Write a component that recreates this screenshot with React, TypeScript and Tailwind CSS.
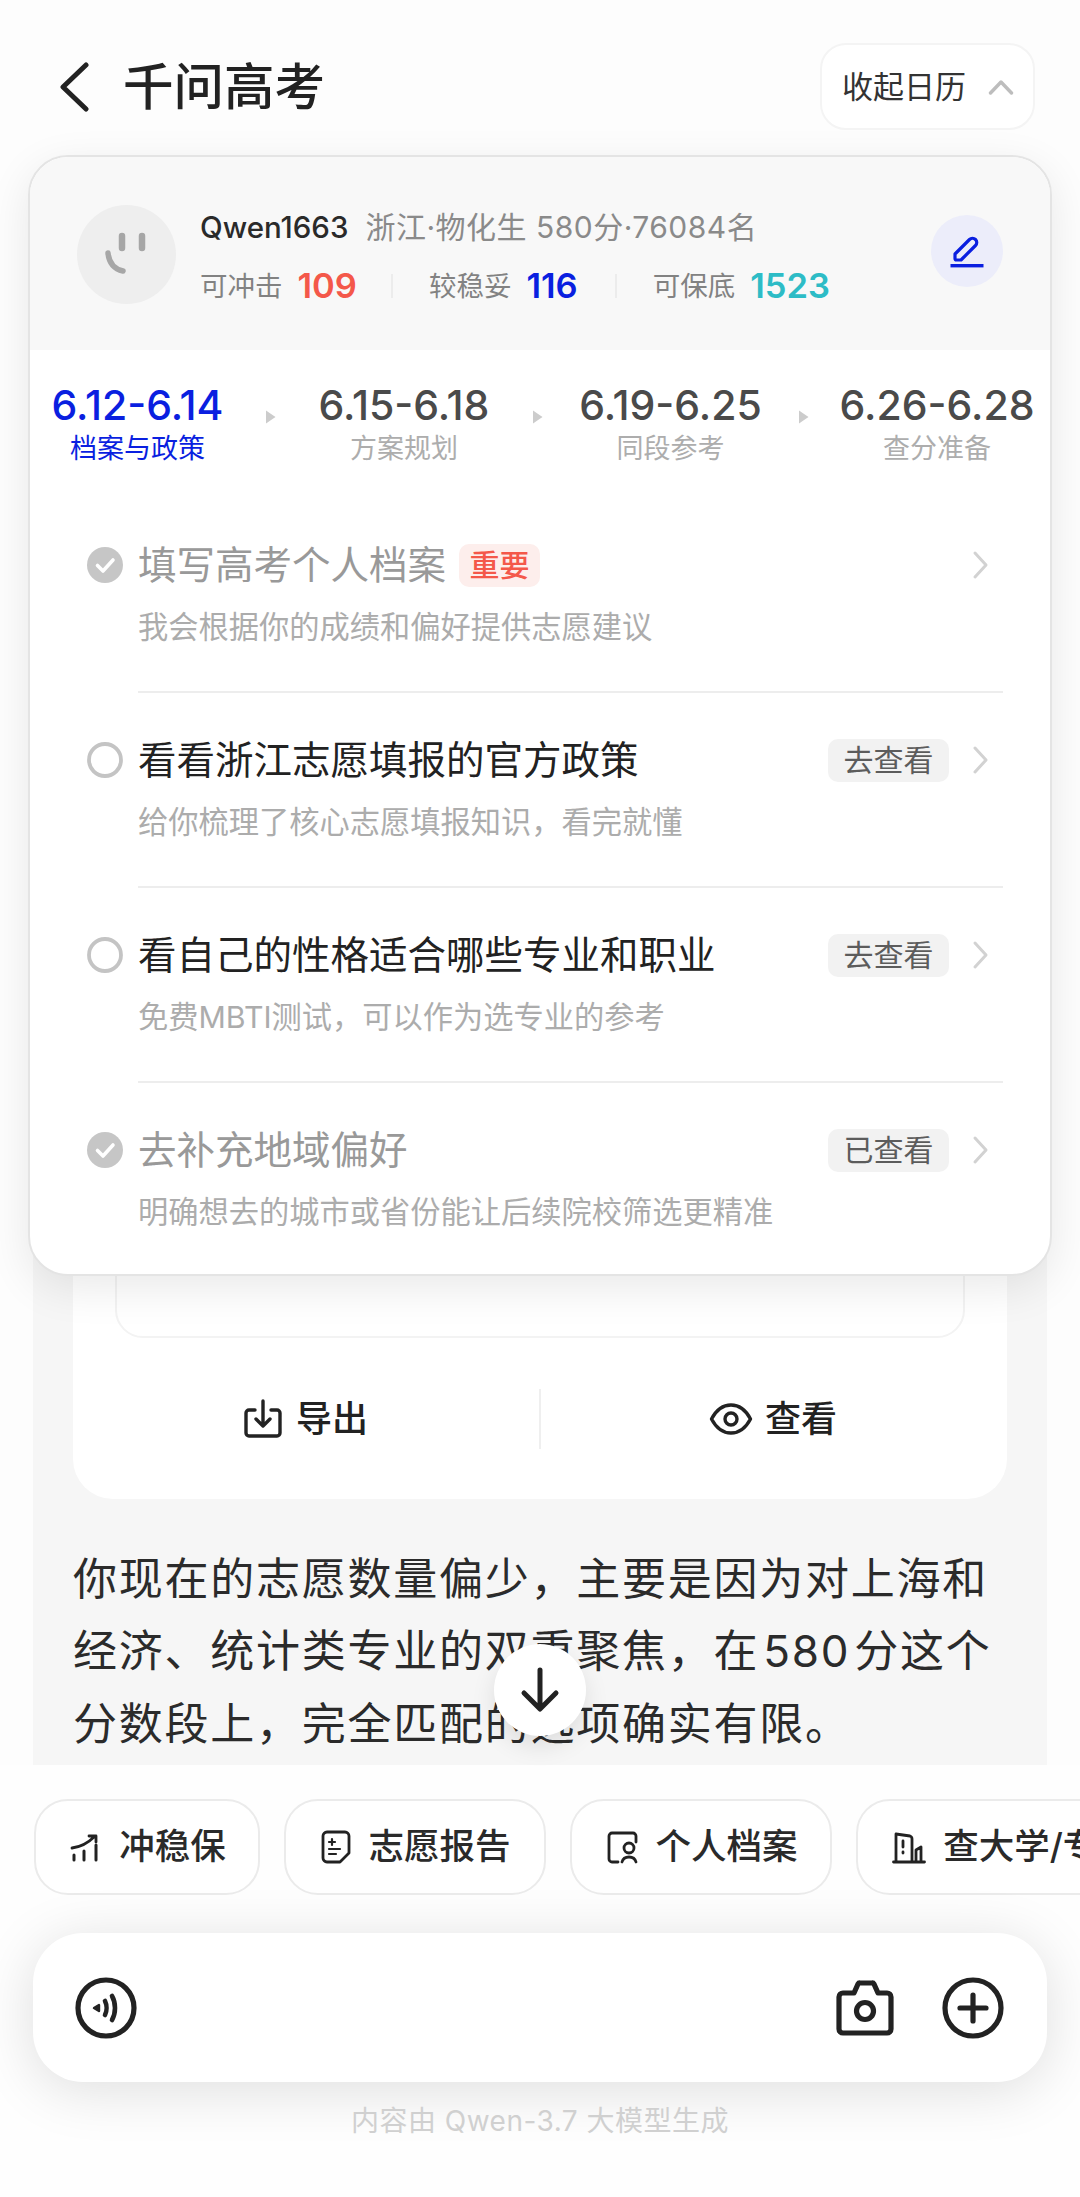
import React from "react";

const FONT = "font-['Inter','Noto_Sans_CJK_SC',sans-serif]";

function Check() {
  return (
    <svg width="36" height="36" viewBox="0 0 36 36" className="shrink-0">
      <circle cx="18" cy="18" r="18" fill="#c6c6c6" />
      <path d="M10.5 18.5l5.5 5.5 10-11" fill="none" stroke="#fff" strokeWidth="3.6" strokeLinecap="round" strokeLinejoin="round" />
    </svg>
  );
}
function Ring() {
  return (
    <svg width="36" height="36" viewBox="0 0 36 36" className="shrink-0">
      <circle cx="18" cy="18" r="16" fill="none" stroke="#c4c4c4" strokeWidth="3.8" />
    </svg>
  );
}
function Chev({ c = "#d2d2d2" }: { c?: string }) {
  return (
    <svg width="18" height="30" viewBox="0 0 18 30" className="shrink-0">
      <path d="M4 3l11 12L4 27" fill="none" stroke={c} strokeWidth="3" strokeLinecap="round" strokeLinejoin="round" />
    </svg>
  );
}

type RowProps = {
  done: boolean;
  title: string;
  sub: string;
  chip?: string;
  tag?: string;
  last?: boolean;
};
function Row({ done, title, sub, chip, tag, last }: RowProps) {
  return (
    <div className={last ? "pt-[42px] pb-[42px]" : "pt-[42px] pb-[44px] border-b-2 border-[#ededed]"}>
      <div className="relative flex items-center h-[50px]">
        <div className="absolute left-[-51px] top-[7px]">{done ? <Check /> : <Ring />}</div>
        <span className={`text-[38.5px] leading-[50px] whitespace-nowrap ${done ? "text-[#999999]" : "text-[#222222]"}`}>{title}</span>
        {tag && (
          <span className="ml-[13px] h-[43px] w-[81px] rounded-[10px] bg-[#fdeeec] text-[#f4584a] text-[30px] leading-[43px] font-medium text-center">
            {tag}
          </span>
        )}
        {chip && (
          <span className="ml-auto h-[43px] w-[121px] rounded-[10px] bg-[#f2f2f2] text-[#5c5c5c] text-[30px] leading-[43px] text-center">
            {chip}
          </span>
        )}
        <div className={chip ? "ml-[22px] mr-[14px]" : "ml-auto mr-[14px]"}>
          <Chev />
        </div>
      </div>
      <div className="mt-[17px] text-[30.25px] leading-[40px] text-[#acacac] whitespace-nowrap">{sub}</div>
    </div>
  );
}

function Tab({ date, label, active }: { date: string; label: string; active?: boolean }) {
  return (
    <div className="w-[175px] shrink-0 flex flex-col items-center">
      <div className={`text-[41px] leading-[54px] font-medium whitespace-nowrap ${active ? "text-[#0a1fe0]" : "text-[#4a4a4a]"}`}>{date}</div>
      <div className={`text-[27px] leading-[32px] mt-[1px] whitespace-nowrap ${active ? "text-[#0a1fe0]" : "text-[#adadad]"}`}>{label}</div>
    </div>
  );
}
function TabArrow() {
  return (
    <div className="w-[91.5px] shrink-0 flex justify-center pt-[32px]">
      <svg width="11" height="14" viewBox="0 0 11 14">
        <path d="M1 0.5L10.5 7 1 13.5z" fill="#cccccc" />
      </svg>
    </div>
  );
}

function Stat({ label, value, color }: { label: string; value: string; color: string }) {
  return (
    <div className="flex items-center gap-[15px] whitespace-nowrap">
      <span className="text-[27.5px] leading-[40px] text-[#828282]">{label}</span>
      <span className={`text-[34.5px] leading-[40px] font-semibold ${color}`}>{value}</span>
    </div>
  );
}

function Chip({ icon, text, w }: { icon: React.ReactNode; text: string; w: string }) {
  return (
    <div className={`${w} shrink-0 h-[96px] rounded-[34px] border-2 border-[#ebebeb] bg-white flex items-center justify-center gap-[17px] pl-[2px]`}>
      {icon}
      <span className="text-[35.5px] leading-[44px] font-medium text-[#2a2a2a] whitespace-nowrap">{text}</span>
    </div>
  );
}

const ic = { fill: "none", stroke: "#222", strokeWidth: 2.8, strokeLinecap: "round", strokeLinejoin: "round" } as const;

export default function App() {
  return (
    <div className={`${FONT} relative w-[1080px] h-[2197px] overflow-hidden bg-[#fdfdfd]`}>
      {/* header */}
      <header className="h-[155px] flex items-start pl-[58px] pr-[45px] pt-[43px]">
        <div className="flex items-center h-[87px]">
          <svg width="32" height="50" viewBox="0 0 32 50">
            <path d="M28 3L5 25l23 22" fill="none" stroke="#222" strokeWidth="5" strokeLinecap="round" strokeLinejoin="round" />
          </svg>
          <h1 className="ml-[33px] text-[50.5px] leading-[60px] font-medium text-[#222] whitespace-nowrap">千问高考</h1>
        </div>
        <button className="ml-auto h-[87px] w-[215px] rounded-[26px] border-2 border-[#f4f4f4] bg-white flex items-center pl-[20px]">
          <span className="text-[31px] leading-[40px] text-[#333] whitespace-nowrap">收起日历</span>
          <svg width="26" height="16" viewBox="0 0 26 16" className="ml-[22px]">
            <path d="M2.5 14L13 3l10.5 11" fill="none" stroke="#bdbdbd" strokeWidth="3.4" strokeLinecap="round" strokeLinejoin="round" />
          </svg>
        </button>
      </header>

      {/* conversation behind the calendar */}
      <main className="mt-[40px] mx-[33px] h-[1570px] bg-[#f6f6f6] flex flex-col justify-end">
        <div className="mx-[40px] h-[1304px] rounded-b-[40px] bg-white flex flex-col justify-end">
          <div className="mx-[42px] h-[300px] rounded-b-[28px] border-2 border-[#f3f3f3]" />
          <div className="flex items-center h-[161px] pt-[2px]">
            <div className="flex-1 flex items-center justify-center gap-[12px] pr-[2px]">
              <svg width="42" height="42" viewBox="0 0 42 42">
                <path d="M13 12H7a3 3 0 00-3 3v20a3 3 0 003 3h28a3 3 0 003-3V15a3 3 0 00-3-3h-6M21 3v24M14 21l7 7 7-7" fill="none" stroke="#222" strokeWidth="3.4" strokeLinecap="round" strokeLinejoin="round" />
              </svg>
              <span className="text-[36px] leading-[46px] font-medium text-[#222]">导出</span>
            </div>
            <div className="w-[2px] h-[60px] bg-[#efefef]" />
            <div className="flex-1 flex items-center justify-center gap-[12px] pr-[2px]">
              <svg width="44" height="34" viewBox="0 0 44 34">
                <path d="M2.5 17C7 8.5 13.5 3 22 3s15 5.5 19.5 14C37 25.5 30.500 31 22 31S7 25.500 2.500 17z" fill="none" stroke="#222" strokeWidth="3.4" strokeLinejoin="round" />
                <circle cx="22" cy="17" r="6" fill="none" stroke="#222" strokeWidth="3.4" />
              </svg>
              <span className="text-[36px] leading-[46px] font-medium text-[#222]">查看</span>
            </div>
          </div>
        </div>
        <div className="px-[40px] pt-[44px] pb-[5px] text-[44px] leading-[72.500px] tracking-[1.750px] text-[#2b2b2b] whitespace-nowrap">
          <div>你现在的志愿数量偏少，主要是因为对上海和</div>
          <div>
            经济、统计类专业的双重聚焦，在<span className="mx-[4px]">580</span>分这个
          </div>
          <div>分数段上，完全匹配的选项确实有限。</div>
        </div>
      </main>

      {/* bottom area */}
      <section className="h-[432px] bg-[#fefefe] flex flex-col">
        <div className="mt-[34px] pl-[34px] flex gap-[24px]">
          <Chip
            w="w-[226px]"
            text="冲稳保"
            icon={
              <svg width="32" height="32" viewBox="0 0 32 32">
                <path d="M2 17c8-1 15-4 22-11M19 5h7v6" {...ic} />
                <path d="M4 24v5M14 20v9M26 14v15" {...ic} strokeWidth={3} />
              </svg>
            }
          />
          <Chip
            w="w-[262px]"
            text="志愿报告"
            icon={
              <svg width="30" height="34" viewBox="0 0 30 34">
                <path d="M6 2h18a4 4 0 014 4v17l-9 9H6a4 4 0 01-4-4V6a4 4 0 014-4z" {...ic} />
                <path d="M11 9v6M8 12h6M8 19h11M8 24h7" {...ic} strokeWidth={2.2} />
              </svg>
            }
          />
          <Chip
            w="w-[262px]"
            text="个人档案"
            icon={
              <svg width="32" height="34" viewBox="0 0 32 34">
                <path d="M30 12V6a3 3 0 00-3-3H6a3 3 0 00-3 3v23a3 3 0 003 3h6" {...ic} />
                <circle cx="23" cy="18" r="5" {...ic} />
                <path d="M16 32c1-4 4-5 7-5s6 1 7 5" {...ic} />
              </svg>
            }
          />
          <Chip
            w="w-[312px]"
            text="查大学/专业"
            icon={
              <svg width="34" height="34" viewBox="0 0 34 34">
                <path d="M1.500 32h31M4 32V4l14 2a3 3 0 012 3v23M24 32V20l5-3v15" {...ic} />
                <path d="M11 11v6M11 22v1" {...ic} />
              </svg>
            }
          />
        </div>
        <div className="mt-[38px] mx-[33px] h-[149px] rounded-[50px] bg-white shadow-[0_8px_56px_rgba(0,0,0,0.13)] flex items-center pl-[42px] pr-[43px]">
          <svg width="62" height="62" viewBox="0 0 62 62">
            <circle cx="31" cy="31" r="28" fill="none" stroke="#222" strokeWidth="5.200" />
            <path d="M19 31l5-3v6z" fill="#222" stroke="#222" strokeWidth="2.400" strokeLinejoin="round" />
            <path d="M30 24c2 4 2 10 0 14M37 19c4 7 4 17 0 24" fill="none" stroke="#222" strokeWidth="4.600" strokeLinecap="round" />
          </svg>
          <svg width="60" height="56" viewBox="0 0 60 56" className="ml-auto translate-x-[3px]">
            <path d="M4 17a4 4 0 014-4h11l4-9a2 2 0 012-1h12a2 2 0 012 1l4 9h9a4 4 0 014 4v32a4 4 0 01-4 4H8a4 4 0 01-4-4z" fill="none" stroke="#222" strokeWidth="5.200" strokeLinejoin="round" />
            <circle cx="30" cy="31" r="8.500" fill="none" stroke="#222" strokeWidth="5.200" />
          </svg>
          <svg width="62" height="62" viewBox="0 0 62 62" className="ml-[50px]">
            <circle cx="31" cy="31" r="28" fill="none" stroke="#222" strokeWidth="5.200" />
            <path d="M31 18v26M18 31h26" fill="none" stroke="#222" strokeWidth="5.200" strokeLinecap="round" />
          </svg>
        </div>
        <div className="mt-[21px] text-center text-[28px] leading-[36px] text-[#d0d0d0] tracking-[0.500px]">内容由 Qwen-3.7 大模型生成</div>
      </section>

      {/* scroll-down button over the text */}
      <div className="absolute left-[494px] top-[1644px] w-[92px] h-[92px] rounded-full bg-white shadow-[0_10px_24px_rgba(0,0,0,0.1)] flex items-center justify-center">
        <svg width="42" height="46" viewBox="0 0 42 46">
          <path d="M21 3v38M5 26l16 16 16-16" fill="none" stroke="#222" strokeWidth="5" strokeLinecap="round" strokeLinejoin="round" />
        </svg>
      </div>

      {/* calendar overlay */}
      <div className="absolute left-[28px] top-[155px] w-[1024px] rounded-[40px] border-2 border-[#e4e4e4] bg-white shadow-[0_12px_44px_rgba(0,0,0,0.09)] overflow-hidden">
        <div className="h-[193px] bg-[#f8f8f8] flex items-start pl-[47px] pr-[47px] pt-[48px]">
          <div className="w-[99px] h-[99px] rounded-full bg-[#eeeeee] flex items-center justify-center shrink-0">
            <svg width="48" height="48" viewBox="0 0 48 48">
              <path d="M19 5v12M39 5v12" fill="none" stroke="#a6a6a6" strokeWidth="6.500" strokeLinecap="round" />
              <path d="M5 22c1 10 6 16 15 18" fill="none" stroke="#a6a6a6" strokeWidth="5.500" strokeLinecap="round" />
            </svg>
          </div>
          <div className="ml-[24px] mt-[2px]">
            <div className="flex items-center h-[40px] whitespace-nowrap">
              <span className="text-[29.5px] leading-[40px] font-medium text-[#2a2a2a]">Qwen1663</span>
              <span className="ml-[17px] text-[30px] leading-[40px] tracking-[0.500px] text-[#8a8a8a]">浙江·物化生 580分·76084名</span>
            </div>
            <div className="mt-[19px] flex items-center">
              <Stat label="可冲击" value="109" color="text-[#f4584a]" />
              <div className="w-[2px] h-[24px] bg-[#ececec] ml-[34px] mr-[36px]" />
              <Stat label="较稳妥" value="116" color="text-[#0a1fe0]" />
              <div className="w-[2px] h-[24px] bg-[#ececec] ml-[37px] mr-[36px]" />
              <Stat label="可保底" value="1523" color="text-[#2dbcc6]" />
            </div>
          </div>
          <div className="ml-auto mt-[10px] w-[72px] h-[72px] rounded-full bg-[#ecedfa] flex items-center justify-center shrink-0">
            <svg width="34" height="34" viewBox="0 0 34 34">
              <path d="M5 24.500V20L19.500 5.500a4.200 4.200 0 016 6L11 26H6.500A1.500 1.500 0 015 24.500z" fill="none" stroke="#0a1fe0" strokeWidth="3.200" strokeLinejoin="round" />
              <rect x="0.500" y="30" width="33" height="3.400" fill="#0a1fe0" />
            </svg>
          </div>
        </div>
        <div className="h-[148px] flex items-start pl-[20px] pt-[28px]">
          <Tab date="6.12-6.14" label="档案与政策" active />
          <TabArrow />
          <Tab date="6.15-6.18" label="方案规划" />
          <TabArrow />
          <Tab date="6.19-6.25" label="同段参考" />
          <TabArrow />
          <Tab date="6.26-6.28" label="查分准备" />
        </div>
        <div className="pl-[108px] pr-[47px]">
          <Row done title="填写高考个人档案" tag="重要" sub="我会根据你的成绩和偏好提供志愿建议" />
          <Row done={false} title="看看浙江志愿填报的官方政策" chip="去查看" sub="给你梳理了核心志愿填报知识，看完就懂" />
          <Row done={false} title="看自己的性格适合哪些专业和职业" chip="去查看" sub="免费MBTI测试，可以作为选专业的参考" />
          <Row done last title="去补充地域偏好" chip="已查看" sub="明确想去的城市或省份能让后续院校筛选更精准" />
        </div>
      </div>
    </div>
  );
}
